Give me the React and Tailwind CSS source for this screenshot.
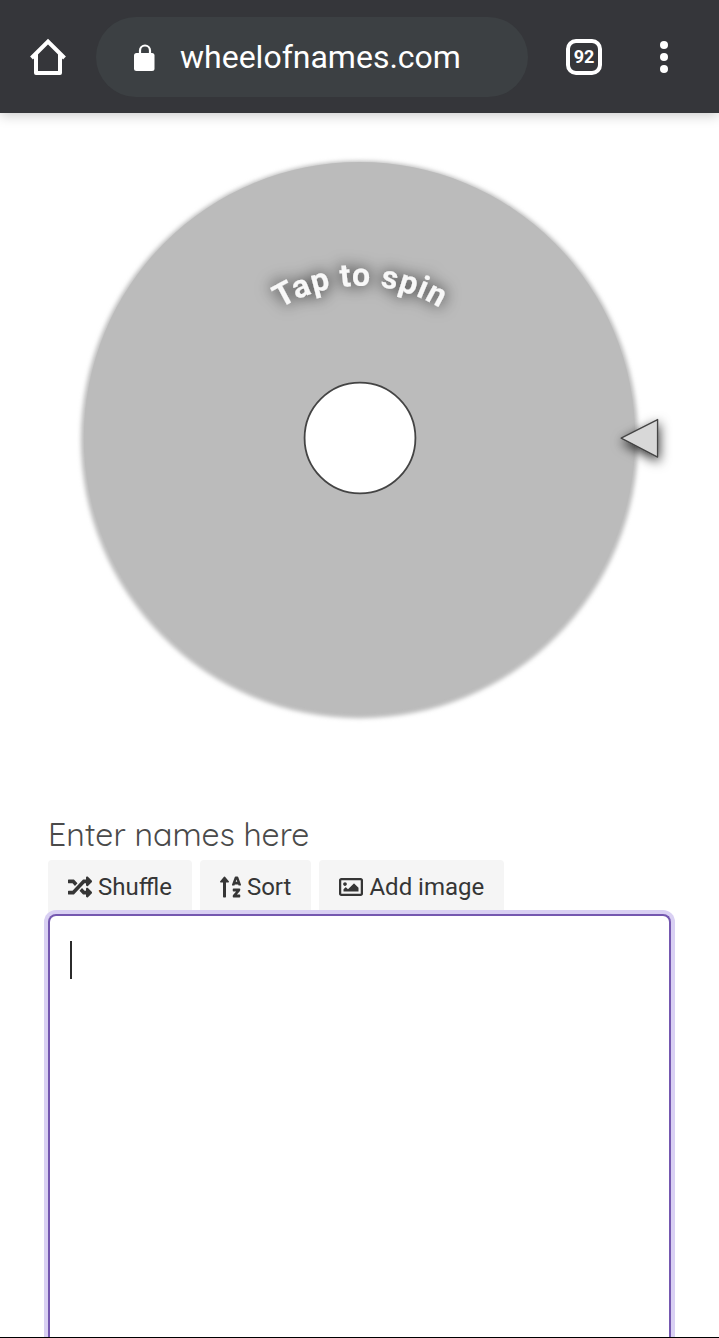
import React from 'react';
import { FaRandom, FaSortAlphaUp, FaRegImage } from 'react-icons/fa';

const BrowserBar = () => {
  return (
    <header className="relative z-10 flex h-[113px] items-center bg-[#35363a] pt-px pr-[31px] text-white shadow-[0_2px_12px_rgba(0,0,0,0.22)]">
      <button type="button" aria-label="Home" className="flex w-24 shrink-0 justify-center">
        <svg className="h-10 w-10" viewBox="0 0 40 40" fill="none" stroke="currentColor" strokeWidth="4" strokeLinejoin="round">
          <path d="M3.5 21 20 4.5 36.5 21" strokeLinejoin="miter" />
          <path d="M8 17v19h24V17" />
        </svg>
      </button>
      <div className="flex h-20 min-w-0 flex-1 items-center gap-6 rounded-full bg-[#3c4043] pl-[38px]">
        <svg className="h-[27px] w-[22px] shrink-0" viewBox="1 0 22 27" aria-hidden="true">
          <path d="M7 11V6.5a5 5 0 0 1 10 0V11" fill="none" stroke="currentColor" strokeWidth="2.2" />
          <rect x="1" y="9" width="20.5" height="18" rx="2.5" fill="currentColor" />
        </svg>
        <span className="truncate text-[32px] leading-10">wheelofnames.com</span>
      </div>
      <button type="button" aria-label="Tabs" className="flex w-28 shrink-0 justify-center">
        <span className="flex h-9 w-9 items-center justify-center rounded-[10px] border-4 border-white text-[18px] leading-5 font-bold">
          92
        </span>
      </button>
      <button type="button" aria-label="Menu" className="flex w-12 shrink-0 justify-center">
        <svg className="h-8 w-2" viewBox="0 0 8 32" fill="currentColor">
          <circle cx="4" cy="4" r="4" />
          <circle cx="4" cy="16" r="4" />
          <circle cx="4" cy="28" r="4" />
        </svg>
      </button>
    </header>
  );
};

const Wheel = () => {
  return (
    <svg className="block w-full" viewBox="0 0 720 652" role="img" aria-label="Wheel">
      <defs>
        <filter id="wheelShadow" x="-10%" y="-10%" width="120%" height="120%">
          <feGaussianBlur stdDeviation="2" />
        </filter>
        <filter id="textShadow" x="-30%" y="-60%" width="160%" height="220%">
          <feDropShadow dx="0" dy="0" stdDeviation="8" floodColor="#000" floodOpacity="0.9" />
        </filter>
        <filter id="pointerShadow" x="-80%" y="-80%" width="260%" height="260%">
          <feDropShadow dx="1" dy="4" stdDeviation="6" floodColor="#000" floodOpacity="0.8" />
        </filter>
        <path id="spinArc" d="M208 326a153 153 0 0 1 306 0" />
      </defs>
      <circle cx="360" cy="327" r="279" fill="#bbb" filter="url(#wheelShadow)" />
      <circle cx="360" cy="325" r="276" fill="#bbb" />
      <text fill="#f8f8f8" fontSize="32" fontWeight="700" letterSpacing="1" textAnchor="middle" filter="url(#textShadow)">
        <textPath href="#spinArc" startOffset="50%">Tap to spin</textPath>
      </text>
      <circle cx="360.5" cy="325.5" r="55.5" fill="#fff" stroke="#444" strokeWidth="1.8" />
      <path
        d="M622 325.5 658.5 307V344.5Z"
        fill="#d8d8d8"
        stroke="#444"
        strokeWidth="1.4"
        strokeLinejoin="round"
        filter="url(#pointerShadow)"
      />
    </svg>
  );
};

const ToolButton = ({ icon, children }) => {
  return (
    <button type="button" className="flex h-[54px] items-center gap-1.5 rounded-t bg-[#f5f5f5] px-5 text-2xl text-[#363636]">
      {icon}
      {children}
    </button>
  );
};

const App = () => {
  return (
    <div className="flex h-screen flex-col overflow-hidden border-b border-black bg-white font-[Roboto,sans-serif]">
      <BrowserBar />
      <Wheel />
      <main className="flex flex-1 flex-col px-12 pt-12">
        <label htmlFor="names" className="pb-1 font-[Quicksand,Lato,sans-serif] text-[32px] leading-[44px] text-[#4a4a4a]">
          Enter names here
        </label>
        <div className="flex gap-2">
          <ToolButton icon={<FaRandom className="h-6 w-6" />}>Shuffle</ToolButton>
          <ToolButton icon={<FaSortAlphaUp className="h-6 w-[21px]" />}>Sort</ToolButton>
          <ToolButton icon={<FaRegImage className="h-6 w-6" />}>Add image</ToolButton>
        </div>
        <div className="relative flex flex-1">
          <textarea
            id="names"
            className="block w-full flex-1 resize-none rounded-t-lg border-2 border-b-0 border-[#7558b0] bg-white px-5 py-6 text-[32px] text-[#363636] caret-transparent shadow-[0_0_0_4px_#d9d0f3] outline-none"
          />
          {/* text cursor */}
          <span className="pointer-events-none absolute top-[27px] left-[22px] h-[38px] w-0.5 bg-[#2b2b2b]" />
        </div>
      </main>
    </div>
  );
};

export default App;
